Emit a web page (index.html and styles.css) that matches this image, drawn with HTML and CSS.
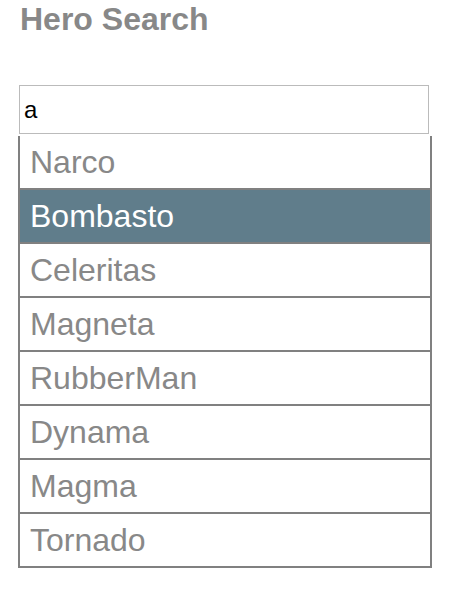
FILE: index.html
```html
<!DOCTYPE html>
<html>
<head>
<meta charset="utf-8">
<link rel="stylesheet" href="styles.css">
</head>
<body>
<div class="search">
  <h4 class="title">Hero Search</h4>
  <input class="search-box" type="text" value="a">
  <ul class="results">
    <li class="result">Narco</li>
    <li class="result selected">Bombasto</li>
    <li class="result">Celeritas</li>
    <li class="result">Magneta</li>
    <li class="result">RubberMan</li>
    <li class="result">Dynama</li>
    <li class="result">Magma</li>
    <li class="result">Tornado</li>
  </ul>
</div>
</body>
</html>
```
FILE: styles.css
```css
html, body {
  margin: 0;
  padding: 0;
  background: #fff;
}
body {
  font-family: "Liberation Sans", Arial, Helvetica, sans-serif;
}
.search {
  padding: 1px 0 0 18px;
}
.title {
  margin: 0 0 0 2px;
  font-size: 32px;
  line-height: 36px;
  font-weight: bold;
  color: #888;
}
.search-box {
  display: block;
  box-sizing: border-box;
  margin: 48px 0 0 1px;
  width: 410px;
  height: 49px;
  padding: 0 4px;
  border: 1px solid #bbb;
  font-family: "Liberation Sans", Arial, Helvetica, sans-serif;
  font-size: 24px;
  color: #000;
  outline: none;
}
.results {
  list-style: none;
  margin: 2px 0 0 0;
  padding: 0;
  width: 414px;
}
.result {
  box-sizing: content-box;
  height: 32px;
  padding: 10px;
  font-size: 32px;
  line-height: 32px;
  color: #888;
  background: #fff;
  border-left: 2px solid #808080;
  border-right: 2px solid #808080;
  border-bottom: 2px solid #808080;
}
.result.selected {
  background: #607d8b;
  color: #fff;
}
```
